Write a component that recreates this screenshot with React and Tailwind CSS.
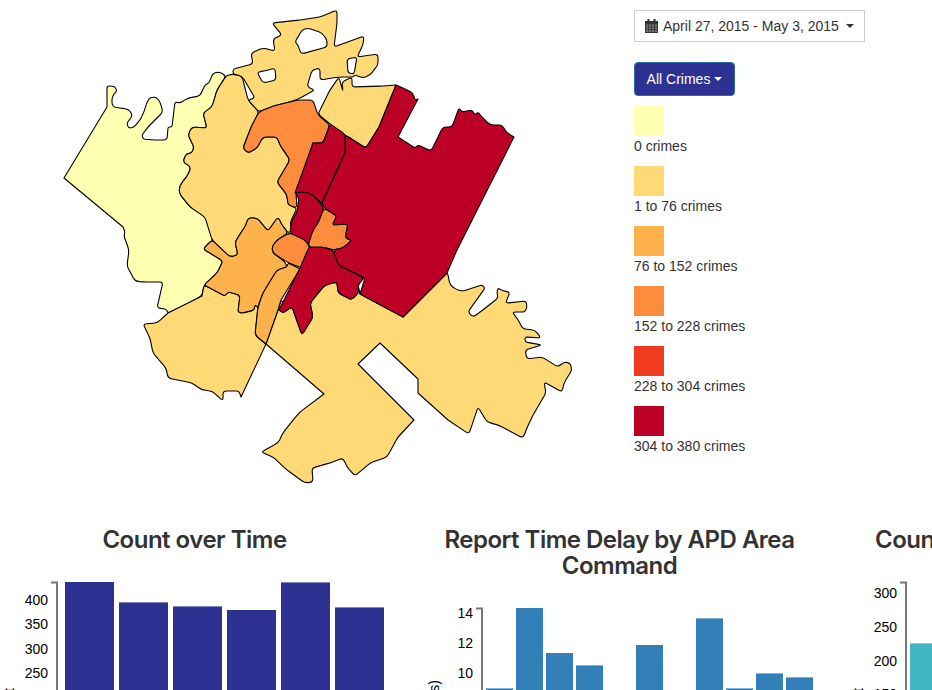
const regions = [
  // west pale
  ['#ffffb2', 'M64,178 L107,107 L107,86 L112,86 L115,87 L117,91 L114,94 L112,98 L112,104 L114,107 L120,108 L127,109 L131,112 L132,116 L130,119 L127,123 L128,127 L130,128 L134,127 L140,120 L144,112 L147,102 L150,98 L153,97 L157,98 L160,102 L163,112 L155,120 L148,127 L142,135 L143,139 L155,140 L167,140 L168,127 L172,127 L175,102 L180,103 L188,98 L200,96 L205,85 L209,83 L213,73 L220,72 L226,76 L217,90 L212,107 L203,113 L207,128 L192,127 L188,135 L194,147 L192,153 L186,154 L183,162 L191,167 L188,175 L180,185 L179,193 L190,207 L205,217 L209,226 L213,240 L203,249 L223,261 L217,273 L204,285 L202,296 L185,305 L168,313 L166,309 L157,308 L163,282 L143,282 L135,281 L127,266 L129,250 L124,236 L125,232 L123,227 Z'],
  // central-west light
  ['#fed976', 'M226,76 L232,74 L242,76 L248,100 L259,112 L252,125 L243,148 L248,153 L257,148 L263,137 L277,137 L280,145 L290,160 L277,182 L287,195 L288,205 L297,208 L290,223 L292,230 L288,233 L282,225 L278,217 L268,231 L257,218 L248,218 L246,225 L235,242 L238,255 L230,257 L212,240 L205,217 L190,207 L179,193 L180,185 L188,175 L191,167 L183,162 L186,154 L192,153 L194,147 L188,135 L192,127 L207,128 L203,113 L212,107 L217,90 Z'],
  // north light
  ['#fed976', 'M233,69 L253,64 L251,53 L263,48 L275,51 L273,39 L282,35 L272,23 L300,20 L320,17 L337,10 L337,23 L334,47 L364,36 L363,45 L357,57 L378,54 L378,65 L370,75 L363,78 L355,75 L353,77 L339,77 L320,80 L320,68 L312,70 L307,87 L315,90 L298,99 L290,102 L273,106 L259,112 L248,100 L255,98 L242,76 L233,74 Z'],
  // north-east light
  ['#fed976', 'M318,114 L330,90 L339,77 L343,92 L342,82 L352,77 L352,87 L383,86 L396,85 L379,127 L366,148 L345,135 L330,124 Z'],
  // big south
  ['#fed976', 'M278,310 L281,300 L292,307 L302,335 L313,317 L310,303 L325,285 L337,282 L338,293 L352,300 L358,285 L360,294 L403,317 L447,273 L448,275 L450,285 L457,290 L463,291 L482,285 L485,288 L468,312 L473,317 L483,310 L498,298 L497,292 L498,288 L503,291 L510,292 L506,302 L508,303 L526,301 L527,307 L525,312 L512,312 L517,318 L523,329 L535,330 L541,338 L525,337 L525,342 L542,345 L525,350 L527,359 L542,357 L558,367 L564,362 L570,363 L572,370 L564,383 L562,392 L544,382 L546,393 L540,403 L532,417 L527,428 L523,438 L498,425 L487,422 L478,407 L469,434 L448,420 L418,393 L418,379 L380,343 L358,364 L414,420 L398,437 L387,457 L370,463 L355,476 L347,467 L343,458 L330,463 L312,468 L313,482 L305,483 L287,470 L273,457 L261,452 L278,443 L283,433 L293,420 L300,412 L324,394 L266,344 Z'],
  // south-west light
  ['#fed976', 'M143,324 L157,323 L168,313 L202,296 L204,285 L225,296 L228,292 L240,295 L238,312 L242,313 L254,310 L255,305 L258,307 L255,335 L266,344 L241,397 L239,391 L223,391 L223,401 L212,391 L202,390 L192,383 L168,378 L166,368 L153,353 L150,338 Z'],
  // west-south orange
  ['#feb24c', 'M212,240 L203,249 L223,261 L217,273 L204,285 L225,296 L228,292 L240,295 L238,312 L242,313 L254,310 L255,305 L258,307 L263,293 L277,270 L287,267 L285,262 L273,253 L272,247 L277,240 L288,233 L282,225 L278,217 L268,231 L257,218 L248,218 L246,225 L235,242 L238,255 L230,257 Z'],
  // sliver
  ['#feb24c', 'M287,267 L277,270 L263,293 L258,307 L255,335 L266,344 L278,310 L281,300 L300,269 L288,263 Z'],
  // north orange
  ['#fd8d3c', 'M259,112 L273,106 L290,102 L298,100 L313,100 L318,115 L330,125 L323,143 L313,143 L298,190 L296,193 L297,208 L288,205 L287,195 L277,182 L290,160 L280,145 L277,137 L263,137 L257,148 L248,153 L243,148 L252,125 Z'],
  // small orange
  ['#fd8d3c', 'M272,247 L277,240 L289,233 L300,236 L307,242 L310,249 L301,268 L287,262 L273,253 Z'],
  // centre orange
  ['#fd8d3c', 'M308,245 L313,230 L318,223 L324,208 L337,216 L332,225 L348,224 L345,238 L352,240 L343,248 L333,250 L322,247 L313,249 Z'],
  // east big red
  ['#bd0026', 'M396,85 L405,89 L413,93 L415,100 L418,99 L398,137 L415,148 L418,145 L431,151 L443,127 L452,127 L459,108 L462,112 L472,110 L475,115 L478,112 L482,117 L490,125 L502,125 L507,133 L514,137 L457,250 L447,273 L403,317 L360,294 L365,278 L338,265 L333,250 L343,248 L352,240 L345,238 L348,224 L332,225 L337,216 L324,208 L322,203 L345,153 L345,135 L366,148 L379,127 Z'],
  // strip red
  ['#bd0026', 'M330,124 L345,134 L345,153 L323,200 L322,204 L313,195 L305,192 L295,193 L313,143 L323,143 Z'],
  // central red
  ['#bd0026', 'M295,193 L305,192 L313,195 L324,208 L318,223 L313,230 L308,245 L305,240 L290,233 L292,220 L297,212 L299,198 Z'],
  // south red
  ['#bd0026', 'M309,247 L322,247 L333,250 L338,265 L364,278 L358,285 L359,292 L352,300 L338,293 L337,282 L325,285 L310,303 L313,317 L302,335 L292,307 L283,313 L279,310 L300,268 Z'],
];

const holes = [
  'M295,42 L302,30 L308,28 L322,33 L327,40 L327,47 L301,54 L298,45 Z',
  'M257,72 L265,71 L275,68 L276,80 L263,83 Z',
  'M347,59 L357,57 L354,74 L348,73 Z',
];

// Softens the short, wiggly vertices of a boundary; long straight edges keep their sharp corners.
function smooth(d) {
  const n = d.match(/-?\d+(\.\d+)?/g).map(Number);
  const p = [];
  for (let i = 0; i < n.length; i += 2) p.push([n[i], n[i + 1]]);
  const len = (a, b) => Math.hypot(a[0] - b[0], a[1] - b[1]);
  const f = (v) => v.toFixed(1);
  let out = '';
  p.forEach((c, i) => {
    const a = p[(i - 1 + p.length) % p.length];
    const b = p[(i + 1) % p.length];
    const la = len(a, c);
    const lb = len(b, c);
    const sharp = la > 35 || lb > 35;
    const r = sharp ? 0 : Math.min(3.5, 0.45 * la, 0.45 * lb);
    const s = [c[0] + ((a[0] - c[0]) * r) / la, c[1] + ((a[1] - c[1]) * r) / la];
    const e = [c[0] + ((b[0] - c[0]) * r) / lb, c[1] + ((b[1] - c[1]) * r) / lb];
    out += `${i === 0 ? 'M' : 'L'}${f(s[0])},${f(s[1])} Q${c[0]},${c[1]} ${f(e[0])},${f(e[1])} `;
  });
  return out + 'Z';
}

const legend = [
  ['bg-[#ffffb2]', '0 crimes'],
  ['bg-[#fed976]', '1 to 76 crimes'],
  ['bg-[#feb24c]', '76 to 152 crimes'],
  ['bg-[#fd8d3c]', '152 to 228 crimes'],
  ['bg-[#f03b20]', '228 to 304 crimes'],
  ['bg-[#bd0026]', '304 to 380 crimes'],
];

function Caret({ className }) {
  return <span className={`inline-block w-0 h-0 border-x-4 border-t-4 border-x-transparent ${className}`} />;
}

function Calendar() {
  return (
    <svg width="13" height="14" viewBox="0 0 13 14" className="shrink-0">
      <rect x="0" y="2" width="13" height="12" fill="#333" />
      <rect x="2.5" y="0" width="2" height="3.5" fill="#333" />
      <rect x="8.5" y="0" width="2" height="3.5" fill="#333" />
      <rect x="1" y="5.5" width="11" height="7.5" fill="#777" />
      <path d="M3.5,5.5V13M6.5,5.5V13M9.5,5.5V13M1,8H12M1,10.5H12" stroke="#333" strokeWidth="0.8" />
    </svg>
  );
}

function Chart({ height = 127, axisX, top, ticks, bars, color, labelX, label, labelY, width = 425, offset }) {
  return (
    <svg width={width} height={height} className="block overflow-hidden">
      <g transform={`translate(${-offset},0)`}>
        <path d={`M${axisX - 6},${top + 0.5}H${axisX}V${height + 20}`} fill="none" stroke="#777" strokeWidth="2" />
        {ticks.map(([t, y]) => (
          <text key={t} x={axisX - 9} y={y + 5} textAnchor="end" fontSize="14" fill="#000">{t}</text>
        ))}
        {bars.map(([x, w, y], i) => (
          <rect key={i} x={x} y={y} width={w} height={height + 20 - y} fill={color} />
        ))}
        <text transform={`translate(${labelX},${labelY}) rotate(-90)`} textAnchor="end" fontSize="14" fill="#000">{label}</text>
      </g>
    </svg>
  );
}

export default function App() {
  return (
    <div className="relative w-[932px] h-[690px] overflow-hidden bg-white text-[#333] text-sm font-['Liberation_Sans',sans-serif]">
      <div className="flex h-[507px]">
        <svg width="634" height="507" viewBox="0 0 634 507" className="block shrink-0">
          {regions.map(([fill, d], i) => (
            <path key={i} d={smooth(d)} fill={fill} stroke="#000" strokeWidth="1.1" strokeLinejoin="round" />
          ))}
          {holes.map((d, i) => (
            <path key={i} d={smooth(d)} fill="#fff" stroke="#000" strokeWidth="1.1" strokeLinejoin="round" />
          ))}
        </svg>
        <div className="pt-[10px] flex flex-col items-start">
          <div className="w-[231px] h-8 border border-[#ccc] flex items-center pl-[10px] gap-[5px] leading-5">
            <Calendar />
            <span className="whitespace-nowrap">April 27, 2015 - May 3, 2015</span>
            <Caret className="border-t-[#333] ml-[2px]" />
          </div>
          <button className="mt-5 w-[101px] h-[34px] rounded border border-[#2e6da4] bg-[#2d3192] text-white flex items-center justify-center gap-1 leading-5">
            All Crimes
            <Caret className="border-t-white" />
          </button>
          <div className="mt-[10px] flex flex-col gap-[10px]">
            {legend.map(([c, t]) => (
              <div key={t}>
                <div className={`w-[30px] h-[30px] ${c}`} />
                <div className="leading-5">{t}</div>
              </div>
            ))}
          </div>
        </div>
      </div>

      <div className="ml-[-18px] grid grid-cols-[425px_425px_425px] pt-5">
        <div>
          <h3 className="text-2xl leading-[26.4px] font-semibold text-center font-['Inter',sans-serif] tracking-[-0.5px] mb-[10px]">Count over Time</h3>
          <Chart
            height={127}
            offset={-18}
            axisX={57}
            top={19}
            ticks={[['400', 37], ['350', 61], ['300', 86], ['250', 110]]}
            color="#2d3192"
            bars={[[65, 49, 19], [119, 49, 39.4], [173, 49, 43.4], [227, 49, 47], [281, 49, 19.4], [335, 49, 44.4]]}
            labelX={14}
            labelY={125}
            label="Count"
          />
        </div>
        <div>
          <h3 className="text-2xl leading-[26.4px] font-semibold text-center font-['Inter',sans-serif] tracking-[-0.5px] mb-[10px] px-5">Report Time Delay by APD Area Command</h3>
          <Chart
            height={100}
            offset={-18}
            axisX={57}
            top={18}
            ticks={[['14', 23], ['12', 53], ['10', 83]]}
            color="#337fb7"
            bars={[[61, 27, 98.4], [91, 27, 18], [121, 27, 63], [151, 27, 75.4], [211, 27, 55], [271, 27, 28.4], [301, 27, 98.4], [331, 27, 83.4], [361, 27, 87.4]]}
            labelX={14}
            labelY={90}
            label="Delay (Days)"
          />
        </div>
        <div className="min-w-0">
          <h3 className="text-2xl leading-[26.4px] font-semibold font-['Inter',sans-serif] tracking-[-0.5px] mb-[10px] pl-[43px] whitespace-nowrap">Count by Crime Type</h3>
          <Chart
            height={127}
            offset={-18}
            axisX={56}
            top={19}
            ticks={[['300', 30], ['250', 64], ['200', 98], ['150', 131]]}
            color="#41b6c4"
            bars={[[60, 60, 80.4]]}
            labelX={13}
            labelY={125}
            label="Count"
          />
        </div>
      </div>
    </div>
  );
}
